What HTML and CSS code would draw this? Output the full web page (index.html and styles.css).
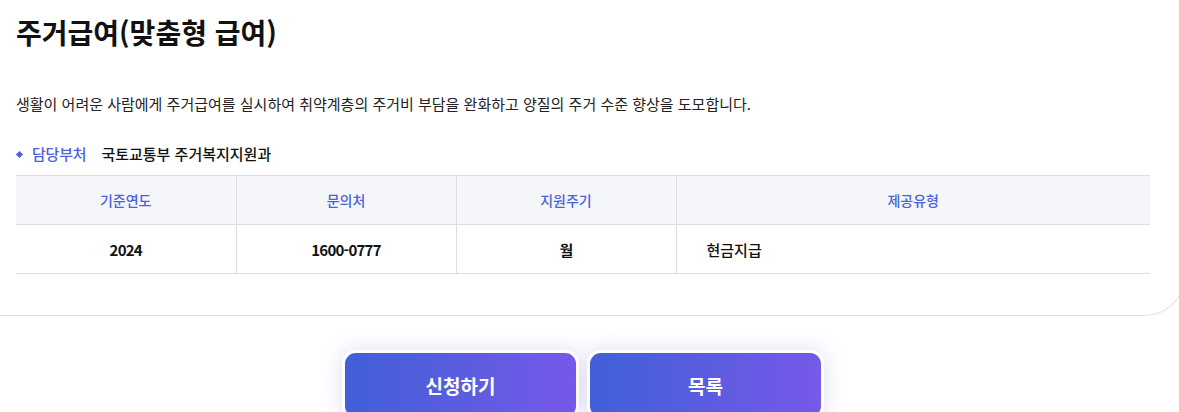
FILE: index.html
```html
<!DOCTYPE html>
<html lang="ko">

<head>
    <meta charset="UTF-8">
    <meta name="viewport" content="width=device-width, initial-scale=1.0">
    <title>주거급여</title>
    <link rel="stylesheet" href="styles.css">
</head>

<body>
    <div class="wrap">
        <div class="card">
            <h1 class="title">주거급여(맞춤형 급여)</h1>
            <p class="desc">생활이 어려운 사람에게 주거급여를 실시하여 취약계층의 주거비 부담을 완화하고 양질의 주거 수준 향상을 도모합니다.</p>
            <div class="dept">
                <span class="dept-label">담당부처</span>
                <span class="dept-name">국토교통부 주거복지지원과</span>
            </div>
            <table class="info">
                <thead>
                    <tr>
                        <th class="c1">기준연도</th>
                        <th class="c2">문의처</th>
                        <th class="c3">지원주기</th>
                        <th>제공유형</th>
                    </tr>
                </thead>
                <tbody>
                    <tr>
                        <td class="num">2024</td>
                        <td class="num">1600-0777</td>
                        <td class="num">월</td>
                        <td class="type">현금지급</td>
                    </tr>
                </tbody>
            </table>
        </div>

        <div class="btns">
            <button class="btn">신청하기</button>
            <button class="btn">목록</button>
        </div>
    </div>
</body>

</html>
```

FILE: styles.css
```css
* {
    margin: 0;
    padding: 0;
    box-sizing: border-box;
    font-family: 'Noto Sans CJK KR', 'Noto Sans', sans-serif;
}

body {
    background-color: #fff;
    color: #222;
    overflow: hidden;
}

.wrap {
    margin: 0 -6px 0 -19px;
}

.card {
    background: #fff;
    border: 1px solid #e2e2e2;
    border-top: 0;
    border-left: 0;
    border-radius: 0 0 40px 0;
    padding: 12px 34px 41px 35px;
}

.title {
    font-size: 28px;
    font-weight: 700;
    line-height: 40px;
    color: #111;
}

.desc {
    margin-top: 41px;
    font-size: 15px;
    line-height: 22px;
    color: #222;
}

.dept {
    margin-top: 28px;
    display: flex;
    align-items: center;
    font-size: 15px;
    line-height: 22px;
}

.dept-label {
    position: relative;
    padding-left: 16px;
    color: #4b5fdc;
    font-weight: 500;
    margin-right: 15px;
    letter-spacing: -0.2px;
}

.dept-label::before {
    content: '';
    position: absolute;
    left: 1px;
    top: 9px;
    width: 5px;
    height: 5px;
    background: #4b5fdc;
    transform: rotate(45deg);
}

.dept-name {
    color: #111;
    font-weight: 500;
}

.info {
    margin-top: 10px;
    width: 100%;
    border-collapse: collapse;
    border-top: 1px solid #dedede;
    border-bottom: 1px solid #dedede;
}

.info th {
    background: #f5f6fa;
    color: #4a63d8;
    font-size: 14px;
    font-weight: 500;
    height: 49px;
    border-bottom: 1px solid #dedede;
    border-left: 1px solid #dedede;
    text-align: center;
}

.info th:first-child,
.info td:first-child {
    border-left: 0;
}

.info .c1,
.info .c2,
.info .c3 {
    width: 220px;
}

.info td {
    height: 49px;
    font-size: 15px;
    border-left: 1px solid #dedede;
    color: #111;
}

.info .num {
    text-align: center;
    font-weight: 700;
    letter-spacing: -0.75px;
}

.info .type {
    padding-left: 30px;
    font-weight: 500;
}

.btns {
    margin-top: 34px;
    display: flex;
    justify-content: center;
    gap: 8px;
}

.btn {
    width: 237px;
    height: 70px;
    border: 3px solid #fff;
    border-radius: 14px;
    background: linear-gradient(90deg, #4060d8, #7659e9);
    color: #fff;
    font-size: 19px;
    font-weight: 700;
    box-shadow: 0 0 22px rgba(110, 100, 220, 0.22);
    cursor: pointer;
}
```
